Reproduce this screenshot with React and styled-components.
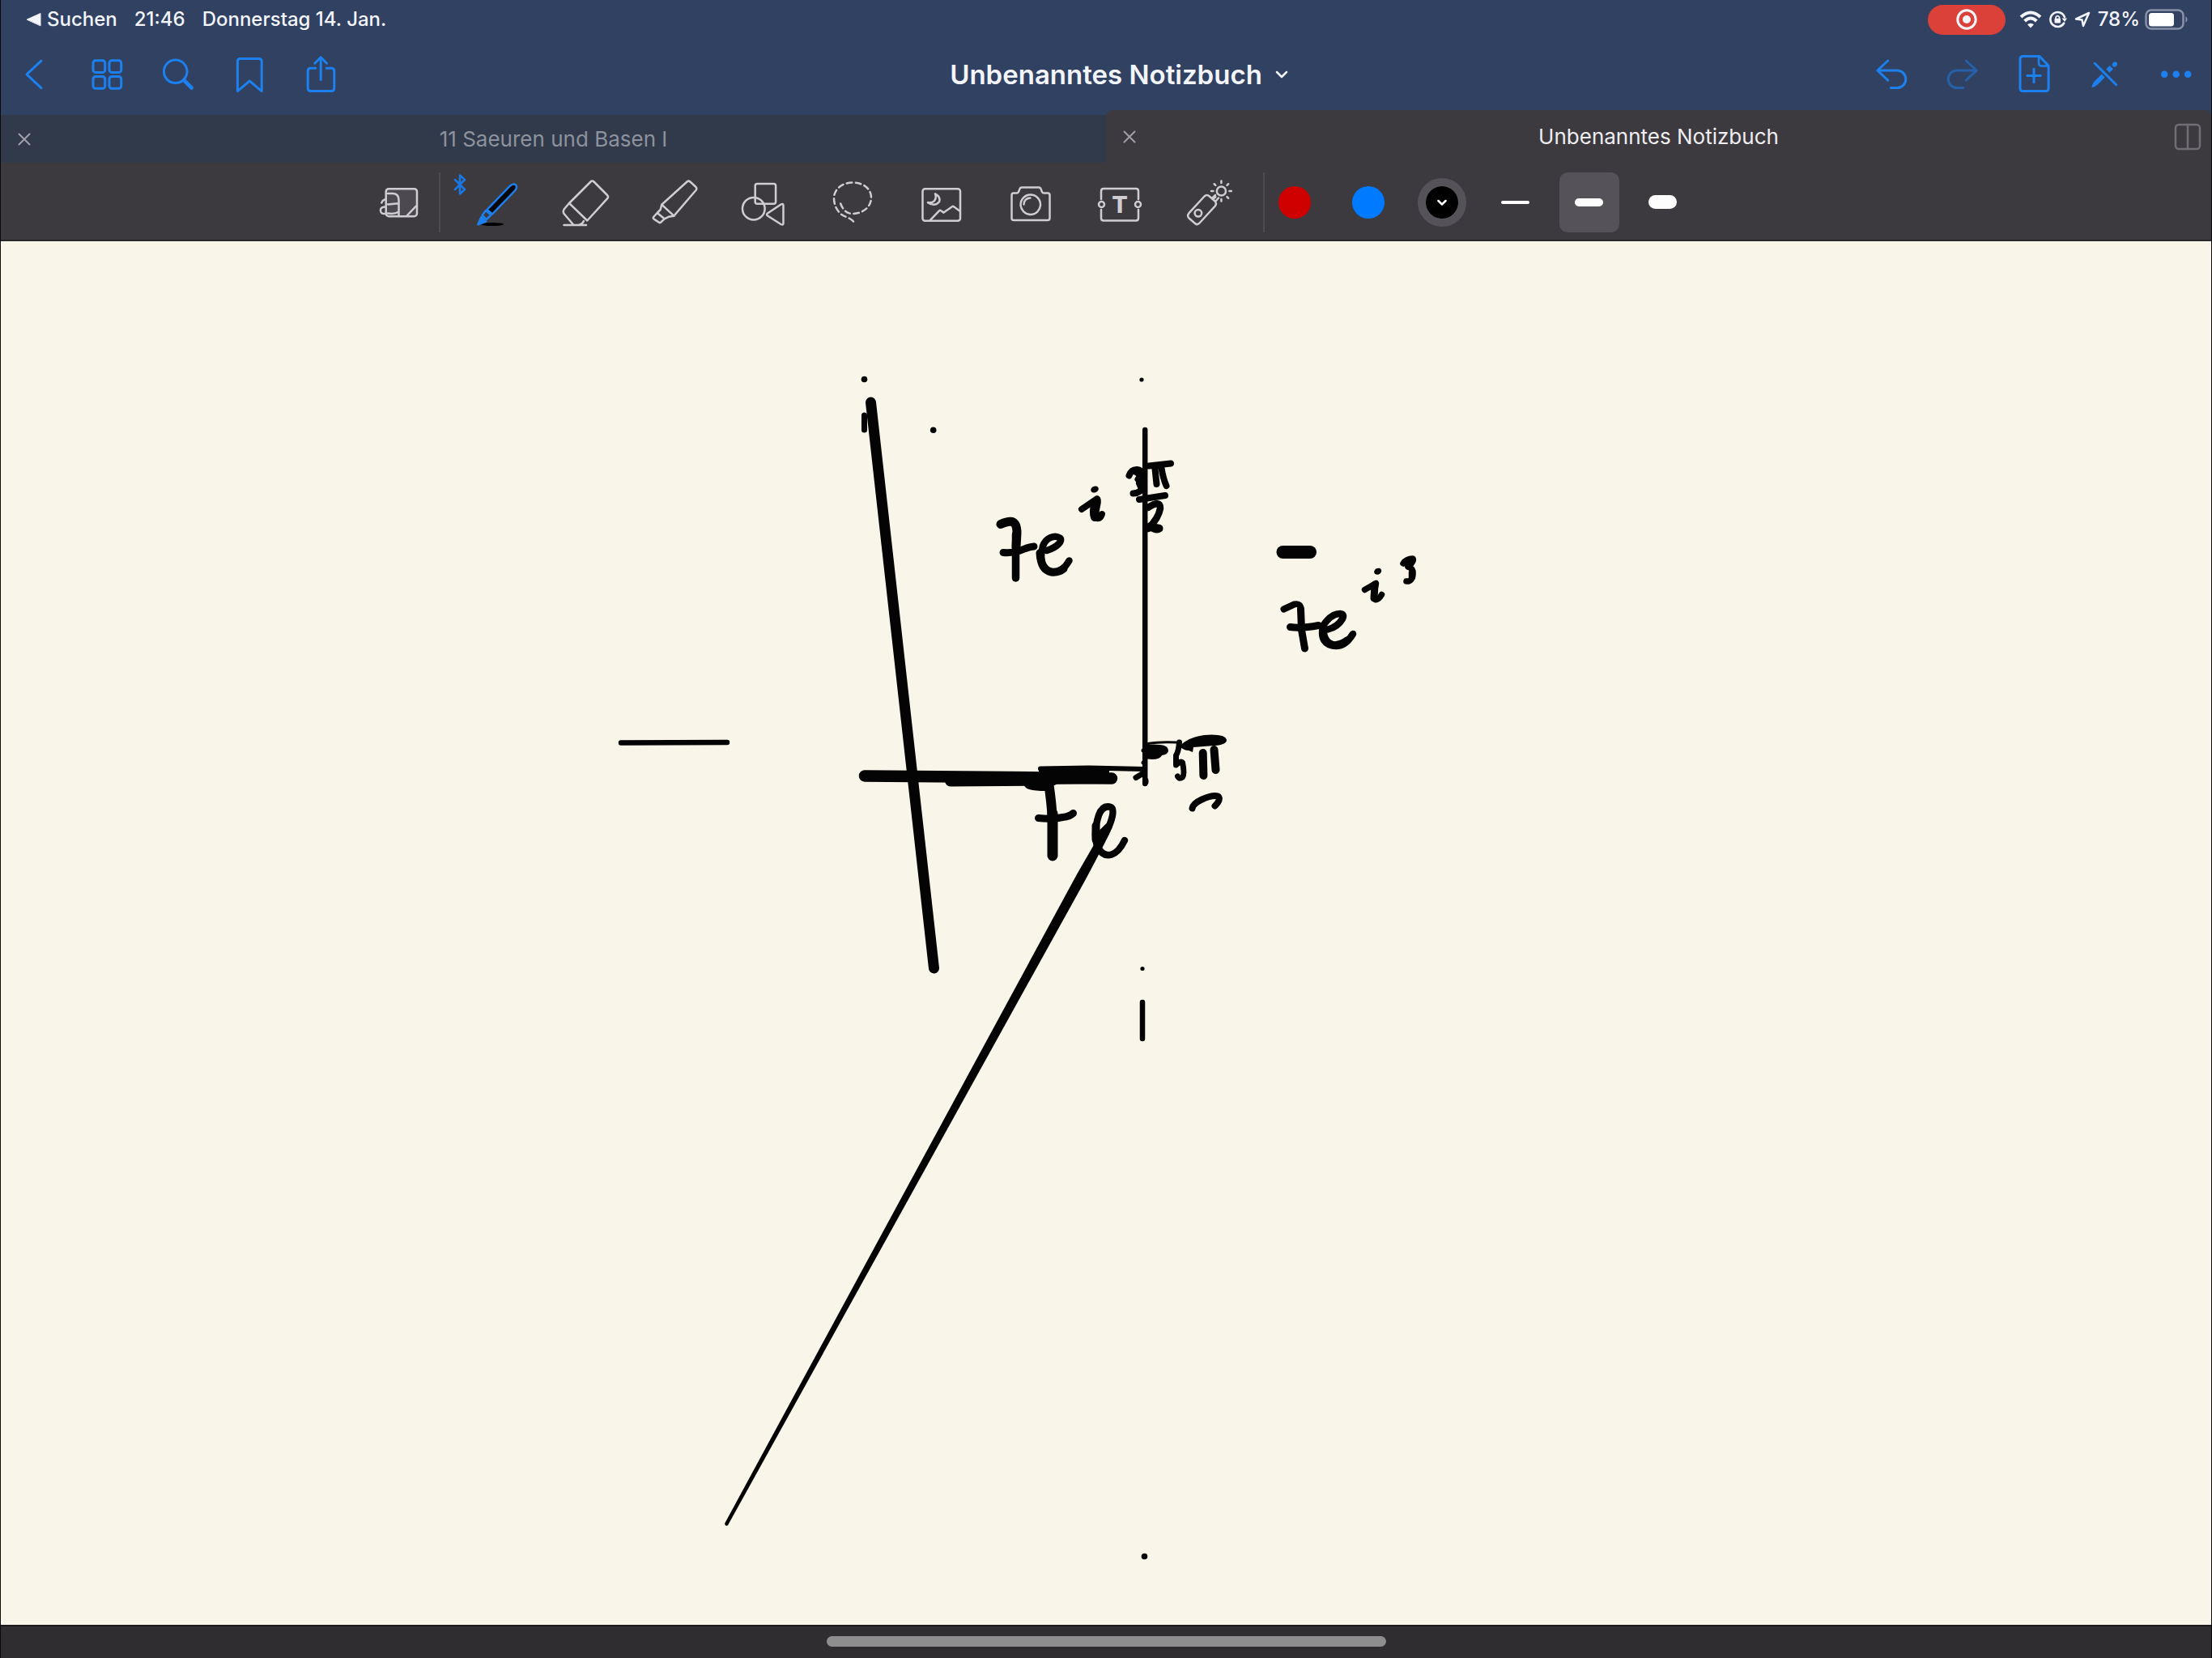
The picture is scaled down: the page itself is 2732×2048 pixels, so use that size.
import React from "react";
import styled, { createGlobalStyle } from "styled-components";

const color = {
  header: "#304162",
  tab: "#303a4b",
  panel: "#3d3a3f",
  raised: "#555359",
  accent: "#1c80ee",
  paper: "#f9f6e9",
  ink: "#050405",
  icon: "#cfcdd2",
};

const GlobalStyle = createGlobalStyle`
  *, *::before, *::after { box-sizing: border-box; }
  body { margin: 0; background: #000; }
  button { margin: 0; padding: 0; border: 0; background: none; color: inherit; font: inherit; cursor: pointer; }
`;

const Page = styled.div`
  display: flex;
  flex-direction: column;
  min-height: 100vh;
  border: solid #0b0b0d;
  border-width: 0 1px;
  background: ${color.header};
  color: #f3f5fa;
  font-family: Inter, "Liberation Sans", sans-serif;
`;

const Glyph = styled.svg`
  display: block;
  flex: none;
  fill: none;
  stroke: currentColor;
  stroke-width: ${(p) => p.$weight || 3};
  stroke-linecap: round;
  stroke-linejoin: round;
`;

/* Status bar */

const StatusBar = styled.div`
  display: flex;
  justify-content: space-between;
  align-items: center;
  height: 48px;
  padding: 0 28px 0 31px;
  font-size: 24px;
  font-weight: 500;
  line-height: 28px;
`;

const StatusGroup = styled.div`
  display: flex;
  align-items: center;
  gap: ${(p) => p.$gap}px;
`;

const BackToApp = styled.button`
  display: flex;
  align-items: center;
  gap: 7px;
`;

const RecordButton = styled.button`
  display: grid;
  place-items: center;
  width: 96px;
  height: 37px;
  margin-right: 8px;
  border-radius: 19px;
  background: #db4138;
`;

/* Battery sits closer to its reading than the other status items. */
const Charge = styled.span`
  display: flex;
  align-items: center;
  gap: 6px;
`;

/* Navigation bar */

const NavBar = styled.nav`
  display: grid;
  grid-template-columns: 1fr auto 1fr;
  align-items: center;
  height: 88px;
`;

const NavGroup = styled.div`
  display: flex;
  justify-content: ${(p) => (p.$end ? "flex-end" : "flex-start")};
`;

const NavButton = styled.button`
  display: grid;
  place-items: center;
  width: 88px;
  height: 88px;
  color: ${color.accent};
  &:disabled { opacity: 0.5; }
`;

const TitleButton = styled.button`
  display: flex;
  align-items: center;
  gap: 16px;
  padding-left: 32px;
  font-size: 33px;
  font-weight: 600;
  line-height: 40px;
`;

/* Tabs */

const TabBar = styled.div`
  display: grid;
  grid-template-columns: 1fr 1fr;
  align-items: end;
`;

const Tab = styled.div`
  display: grid;
  grid-template-columns: 58px 1fr 58px;
  align-items: center;
  height: ${(p) => (p.$active ? 65 : 59)}px;
  border-radius: ${(p) => (p.$active ? "8px 8px 0 0" : 0)};
  background: ${(p) => (p.$active ? color.panel : color.tab)};
  color: ${(p) => (p.$active ? "#eeedf0" : "#8d929d")};
  font-size: 26px;
  font-weight: 400;
  line-height: 32px;
`;

const TabIcon = styled.button`
  display: grid;
  place-items: center;
  height: 59px;
  color: ${(p) => (p.$dim ? "#706e74" : "#a09fa8")};
`;

/* Drawing tools */

const Toolbar = styled.div`
  display: flex;
  justify-content: center;
  align-items: center;
  height: 97px;
  padding: 2px 200px 0 0;
  border-bottom: 2px solid #2a272b;
  background: ${color.panel};
  color: ${color.icon};
`;

const Divider = styled.span`
  width: 2px;
  height: 74px;
  background: #4d4b51;
`;

const PreviewButton = styled.button`
  display: grid;
  place-items: center;
  width: 100px;
  height: 74px;
`;

const ToolGroup = styled.div`
  display: flex;
  padding: 0 12px 0 14px;
`;

const ToolButton = styled.button`
  display: grid;
  place-items: center;
  position: relative;
  width: 110px;
  height: 74px;
`;

const BluetoothBadge = styled.span`
  position: absolute;
  top: 2px;
  left: 2px;
  color: #1877e6;
`;

const PickGroup = styled.div`
  display: flex;
  gap: 17px;
`;

const PickButton = styled.button`
  display: grid;
  place-items: center;
  width: 74px;
  height: 74px;
  border-radius: 10px;
  background: ${(p) => (p.$selected ? color.raised : "transparent")};
`;

const Swatch = styled.span`
  display: grid;
  place-items: center;
  box-sizing: content-box;
  width: 40px;
  height: 40px;
  border: 10px solid ${(p) => (p.$selected ? color.raised : "transparent")};
  border-radius: 50%;
  background: ${(p) => p.$fill} padding-box;
  color: #fff;
`;

const StrokeSample = styled.span`
  width: 35px;
  height: ${(p) => p.$thickness}px;
  border-radius: 9px;
  background: #fdfdfd;
`;

/* Page and home bar */

const Paper = styled.main`
  flex: 1;
  background: ${color.paper};
`;

const Ink = styled.svg`
  display: block;
  width: 100%;
  height: auto;
  fill: none;
  stroke: ${color.ink};
  stroke-linecap: round;
  stroke-linejoin: round;
`;

const HomeBar = styled.footer`
  display: grid;
  place-items: center;
  height: 41px;
  padding-bottom: 2px;
  border-top: 2px solid #1c1a1c;
  background: #302d31;
`;

const HomeIndicator = styled.span`
  width: 691px;
  height: 13px;
  border-radius: 7px;
  background: #8e8e8e;
`;

const NavIcon = ({ children, weight }) => (
  <Glyph width="48" height="48" viewBox="1 0 48 48" $weight={weight} aria-hidden="true">{children}</Glyph>
);
const ToolIcon = ({ children }) => (
  <Glyph width="64" height="64" viewBox="0 0 64 64" $weight={2.5} aria-hidden="true">{children}</Glyph>
);
const CloseIcon = () => (
  <Glyph width="16" height="16" viewBox="0 0 16 16" $weight={2} aria-hidden="true">
    <path d="M1.5 1.5l13 13M14.5 1.5l-13 13" />
  </Glyph>
);

const leftActions = [
  ["Zurück", <path d="M30.900 7.200 13 23.800 30.900 40.600" />],
  ["Übersicht", <><rect x="7" y="6.7" width="14.7" height="14.7" rx="3" /><rect x="27" y="6.7" width="14.7" height="14.7" rx="3" /><rect x="7" y="26.5" width="14.7" height="14.7" rx="3" /><rect x="27" y="26.5" width="14.7" height="14.7" rx="3" /></>],
  ["Suchen", <><circle cx="20.7" cy="20.3" r="14.3" /><path strokeWidth="4.6" d="m31.6 31.5 9 9" /></>],
  ["Lesezeichen", <path d="M9.4 44.6V8q0-3.5 3.5-3.5h22.8q3.5 0 3.5 3.5v36.6L24.3 32Z" />],
  ["Teilen", <><path d="M17.8 16.3h-6q-3.6 0-3.6 3.6V41q0 3.6 3.6 3.6h25.4q3.6 0 3.6-3.6V19.9q0-3.6-3.6-3.6h-6" /><path d="M24.2 30.5V3.2M16.8 10.2l7.4-7.4 7.4 7.4" /></>],
];

const turnArrow = "M28.3 7 41.2 19 28.3 31.2M41 19H17a10.8 10.8 0 0 0 0 21.6h7.7";

const rightActions = [
  ["Rückgängig", <path transform="matrix(-1 0 0 1 50 0)" d={turnArrow} />],
  ["Wiederholen", <path transform="translate(2 0)" d={turnArrow} />, true],
  ["Seite hinzufügen", <g transform="translate(2 0)"><path d="M10.5 1.6h20.6l11 11.6V41q0 3.5-3.5 3.5H10.5Q7 44.500 7 41V5.100Q7 1.600 10.500 1.600Z" /><path d="M30 2v8q0 3.500 3.500 3.500h8" strokeWidth="2.500" /><path d="M24 17.300v16.400M15.800 25.500h16.400" /></g>],
  ["Nur lesen", <g transform="translate(2 0)"><path d="m11.200 10.300 26.500 26.500" /><path d="M7.300 40.300q1.200-6 4.200-8.500l8.300-8.300 4 4-8.500 8.500q-3 3-8 4.300Z" fill="currentColor" stroke="none" /><path d="m27.300 19.700 4.500-4.500" strokeWidth="6" strokeLinecap="butt" /><path d="M35.600 11.700l.6-.6" strokeWidth="5.600" /></g>],
  ["Mehr", <g transform="translate(2 0)" fill="currentColor" stroke="none"><circle cx="9.200" cy="23.800" r="4.300" /><circle cx="23.700" cy="23.800" r="4.300" /><circle cx="38.200" cy="23.800" r="4.300" /></g>],
];

const sunRays = [0, 45, 90, 135, 180, 225, 270, 315];

const tools = [
  ["Stift", <>
    <ellipse cx="27" cy="59" rx="14" ry="2" fill="#000" stroke="none" />
    <g stroke={color.accent}>
      <path d="M20.500 41 48.500 12q4.500-4 7.500-1.500 2.700 3-1.500 7.500L27 46.500Z" fill="#08080c" />
      <path d="M19 42 14.500 48l5.500 5 5.500-5.500Z" />
      <path d="m9.300 59.300 4-9 6 5.300Z" fill={color.accent} />
    </g>
  </>],
  ["Radierer", <>
    <path d="M38.500 6.500q2-2 4 0L59 23q2 2.200 0 4.400L34.300 54.500 12 33Z" />
    <path d="M12 33 6 40q-2.500 3.500 0 6.500l10.500 12.300M30 55q-2 4-5 4.500" />
    <path d="M5.500 60h27.500" />
  </>],
  ["Textmarker", <>
    <path d="M47.500 6.500q2-1.800 4 0l7 6.500q1.600 1.800 0 4L31.300 48.700 16.300 34.700Z" />
    <path d="M16.300 34.700 14.700 41l-4 4 9 7.300 5-2.500 6.600-1.100M10.700 45l-4.500 5q-1 1.500.5 2.600l6.300 4.200q1.500.8 2.600-.6l4.100-3.900" />
  </>],
  ["Formen", <><rect x="21.700" y="9" width="25.400" height="24.800" rx="2.500" /><circle cx="19.800" cy="39.700" r="13.800" /><path d="m37 45.500 16.500-11q3-1.500 3 1.500v21.500q0 3-3 1.500L37 48.500q-2-1.500 0-3Z" /></>],
  ["Lasso", <>
    <path strokeDasharray="6.500 4.500" d="M17.200 33.500Q22 46.500 33 46c13-.8 22-9 22-20S45 7.500 32 7.500 9 16 9 26.500Q9 36 14.500 43c4 5.500 8 6 14 9q5 2.500 6.500 7.500" />
  </>],
  ["Bild", <><rect x="8.500" y="15.200" width="46.500" height="39.500" rx="3" /><path d="m17.500 54.300 11.500-12q1-1 2.200 0l3.300 2.300L45 37.200q1-.7 2 0l7.500 5.600" /><path d="M24 21.300q7 3.500 5 10-5.500 6.500-14 .8 5 1 8-2 3-3.300 1-8.800Z" /></>],
  ["Kamera", <><path d="M11 20.500h3.500q1.800 0 2.500-1.600l1.600-3.800q.7-1.600 2.400-1.600h21q1.700 0 2.400 1.600l1.600 3.800q.7 1.600 2.500 1.600H53q2.500 0 2.500 2.500v28.500q0 2.500-2.500 2.500H11q-2.500 0-2.500-2.500V23q0-2.500 2.500-2.500Z" /><circle cx="31.800" cy="34.700" r="12.200" /><path d="M23.500 34.500q.5-7.500 8-8" /></>],
  ["Text", <>
    <path d="M9 28v-10q0-3 3-3h40q3 0 3 3v10M9 41v10.500q0 3 3 3h40q3 0 3-3V41" />
    <circle cx="9.500" cy="34.500" r="3.500" /><circle cx="54.500" cy="34.500" r="3.500" />
    <text x="32" y="45" textAnchor="middle" fill="currentColor" stroke="none" fontFamily="Inter, sans-serif" fontWeight="800" fontSize="29">T</text>
  </>],
  ["Laserpointer", <>
    <path d="M26.500 24.500q3-3 6.300 0l6.500 5.700q3 3 .5 6.300L20.500 57.500q-2.700 3-5.500.5l-7.500-6.500q-2.700-3 0-6.300Z" />
    <circle cx="18.900" cy="45.300" r="4.300" />
    <path d="m36.500 26.500 3.500-3.500M40.500 30.500l3.500-4" />
    <circle cx="47.400" cy="18" r="5.600" />
    {sunRays.map((a) => <path key={a} d="M57.400 18h2.400" transform={`rotate(${a} 47.400 18)`} />)}
  </>],
];

function StatusIcons() {
  return (
    <>
      <RecordButton aria-label="Aufnahme">
        <Glyph width="28" height="28" viewBox="0 0 28 28" aria-hidden="true">
          <circle cx="14" cy="14" r="11.200" /><circle cx="14" cy="14" r="5" fill="currentColor" stroke="none" />
        </Glyph>
      </RecordButton>
      <Glyph width="28" height="22" viewBox="0 0 28 22" $weight={4} aria-label="WLAN" role="img">
        <path d="M2 8Q14-3 26 8M6.700 13Q14 6 21.300 13" strokeLinecap="butt" />
        <path d="m14 21.500-4-4.200q4-3.300 8 0Z" fill="currentColor" stroke="none" />
      </Glyph>
      <Glyph width="22" height="22" viewBox="0 0 22 22" $weight={2.5} aria-label="Ausrichtung gesperrt" role="img">
        <path d="M18.200 15.500A9 9 0 1 1 18.900 8" />
        <path d="m15.500 9.500h6.500l-3 4.500Z" fill="currentColor" stroke="none" />
        <rect x="6.500" y="9.700" width="7.500" height="5.800" rx="1" fill="currentColor" stroke="none" />
        <path d="M8 10V8.300q2.200-3.300 4.500 0V10" strokeWidth="1.600" />
      </Glyph>
      <Glyph width="20" height="20" viewBox="0 0 20 20" $weight={2.5} aria-label="Ortung" role="img">
        <path d="M18 2 2 9.500l7.500 1L11 18Z" />
      </Glyph>
      <Charge>
        78%
        <Glyph width="54" height="26" viewBox="0 0 54 26" $weight={2.5} aria-label="Batterie" role="img">
          <rect x="1.500" y="1.500" width="46" height="23" rx="6.500" opacity=".45" />
          <rect x="5" y="5" width="31" height="16.500" rx="3.500" fill="#fff" stroke="none" />
          <path d="M50.500 9q4 4 0 8Z" fill="currentColor" stroke="none" opacity=".5" />
        </Glyph>
      </Charge>
    </>
  );
}

function Handwriting() {
  return (
    <Ink viewBox="1 298 2730 1709" role="img" aria-label="Handschriftliche Notizen">
      <g fill={color.ink} stroke="none">
        <circle cx="1067.500" cy="468.500" r="3.800" />
        <circle cx="1152.700" cy="531.300" r="3.800" />
        <circle cx="1410" cy="469" r="2.600" />
        <circle cx="1411" cy="1196.500" r="2.600" />
        <circle cx="1413.500" cy="1922.500" r="3.800" />
        <ellipse cx="1352" cy="604.500" rx="5" ry="3.800" transform="rotate(-25 1352 604.500)" />
        <ellipse cx="1701.700" cy="705.700" rx="4.700" ry="3.800" transform="rotate(-25 1701.700 705.700)" />
        <path d="m1364 1021 8 5q-5 11-31 60L899 1884q-3 2-4-2L1330 1080Z" />
        <path d="M1457 922q9-11 30-14 26-2 28 6 0 6-15 7l-26 2-1 6-5-2q-6 0-11-5Z" />
        <path d="M1411 920q16-1 22 0 10 1 10 7 0 5-8 6-2 5-12 5l-12-1Z" />
        <path d="M1283 948l87 3v17l-79 1v8q-12 0-20-2-7-2-7-10h19Z" />
      </g>

      <path d="M1067.500 513v18" strokeWidth="7" />
      <path d="M767 917.500 898 917M1414.200 531v437M1411 1238v45" strokeWidth="6.500" />
      <path d="M1285 949.500l60-1 68 1.500" strokeWidth="6" />
      <path d="m1403 960.500 10-6M1415 964v2" strokeWidth="7" />
      <path d="M1418 918.500q14-2.500 35-1.500" strokeWidth="3" />
      <path d="M1412 927v0M1412 942v0" strokeWidth="5" />
      <path d="M1075.500 497 1153.500 1196" strokeWidth="13" />
      <path d="m1068 958.500 180 1.500 125 1.500" strokeWidth="14.500" />
      <path d="M1174 964.500 1300 963.500" strokeWidth="14" />

      <path d="M1236 647.500q9-4 14-3 6 2 6 14l-1 17" strokeWidth="11" />
      <path d="M1254.500 660v54" strokeWidth="9.500" />
      <path d="M1239 682.500q14 1 25-4 7-3 13-3.500" strokeWidth="9" />
      <path d="M1293 680c13-4 20-12 16-15.500-6-4-17-1-21 10-5 20 0 30 12 32 10 .5 16-6 20.500-14" strokeWidth="8.500" />
      <path d="M1284.500 683q1 21 14 23.500 9 1 15-4" strokeWidth="10" />

      <path d="m1336 629 19-13q2 1 0 9-3 14 0 15 4 1 6-5" strokeWidth="8" />
      <path d="M1352.500 620q-3 14-.5 19" strokeWidth="10" />

      <path d="M1394.500 587.500q3-8 10-7.500 9 1 1 12 7 3 6 9-2 8-12 8.500" strokeWidth="8" />
      <path d="M1403 583l5 3M1407 597l3 7" strokeWidth="8" />
      <path d="m1419 575.500 27-3M1426.500 579l2 19M1434.500 578q2 13 6 22M1407 617l32-5" strokeWidth="8" />
      <path d="M1418 627q15-10 15 1-2 12-15 25 6-3 14-1" strokeWidth="8.500" />
      <path d="M1420 650q8 6 12 3" strokeWidth="9" />

      <path d="M1584.500 682h33.500" strokeWidth="16" />
      <path d="m1585.500 752.500 13-6q9-2 8 8" strokeWidth="8" />
      <path d="M1606.500 752l1 26 4 23" strokeWidth="9" />
      <path d="M1593.500 774.500q14 2 35-2" strokeWidth="9" />
      <path d="M1640 777.500q12-3 18-13 3-6-3-6.500-11 0-21 15-5 24 16 25 12 0 21-15" strokeWidth="8.500" />
      <path d="M1634 778q1 18 15 19 9-1 15-6" strokeWidth="9.500" />

      <path d="m1685.500 728.500 14-8q-4 18-1 20 4 1 8-6" strokeWidth="7.500" />
      <path d="m1698 722-1 17" strokeWidth="9" />
      <path d="M1733 696q4-6 12-6 2 3-6 10 7 2 6 9-1 10-8 9" strokeWidth="7.500" />
      <path d="m1744 692-4 8M1744 707v6" strokeWidth="8.500" />

      <path d="M1295.500 970q3 20 4 37" strokeWidth="12" />
      <path d="M1300 1005v52" strokeWidth="13" />
      <path d="M1282.500 1010.500q16 2 30-1 9-1 13-5" strokeWidth="9" />
      <path d="M1370 1020q8-20 2-23-10-3-15 10-7 22-2 38 7 14 18 10.500 9-3 16-17.500" strokeWidth="8.500" />
      <path d="M1353.500 1020v17l15-15" strokeWidth="10" />

      <path d="M1456.500 917q-1 12-4 16v12q6-6 8-3 3 14 0 18-4 3-6-1" strokeWidth="7" />
      <path d="m1485.700 930 .7 28M1499.500 926l2 25" strokeWidth="10" />
      <path d="M1472.500 998.500q1-6 12-11 13-6 20-4 4 4-4 12" strokeWidth="8" />
    </Ink>
  );
}

export default function App() {
  return (
    <>
      <GlobalStyle />
      <Page>
        <StatusBar>
          <StatusGroup $gap={21}>
            <BackToApp>
              <Glyph width="19" height="18" viewBox="0 0 19 18" $weight={1} aria-hidden="true">
                <path d="M1.500 9 18 1.500v15Z" fill="currentColor" />
              </Glyph>
              Suchen
            </BackToApp>
            <time>21:46</time>
            <span>Donnerstag 14. Jan.</span>
          </StatusGroup>
          <StatusGroup $gap={9}><StatusIcons /></StatusGroup>
        </StatusBar>

        <NavBar>
          <NavGroup>
            {leftActions.map(([label, icon]) => (
              <NavButton key={label} aria-label={label}><NavIcon weight={3}>{icon}</NavIcon></NavButton>
            ))}
          </NavGroup>
          <TitleButton>
            Unbenanntes Notizbuch
            <Glyph width="16" height="12" viewBox="0 0 16 12" $weight={2.5} aria-hidden="true">
              <path d="m2 3 6 6 6-6" />
            </Glyph>
          </TitleButton>
          <NavGroup $end>
            {rightActions.map(([label, icon, disabled]) => (
              <NavButton key={label} aria-label={label} disabled={disabled}><NavIcon weight={3}>{icon}</NavIcon></NavButton>
            ))}
          </NavGroup>
        </NavBar>

        <TabBar>
          <Tab>
            <TabIcon aria-label="Tab schließen"><CloseIcon /></TabIcon>
            <button>11 Saeuren und Basen I</button>
          </Tab>
          <Tab $active>
            <TabIcon aria-label="Tab schließen"><CloseIcon /></TabIcon>
            <button>Unbenanntes Notizbuch</button>
            <TabIcon $dim aria-label="Geteilte Ansicht">
              <Glyph width="34" height="34" viewBox="0 0 34 34" $weight={2.5} aria-hidden="true">
                <rect x="2" y="2" width="30" height="30" rx="4" /><path d="M17 2v30" />
              </Glyph>
            </TabIcon>
          </Tab>
        </TabBar>

        <Toolbar>
          <PreviewButton aria-label="Zoomfenster">
            <ToolIcon>
              <rect x="16.700" y="15.200" width="38.300" height="34" rx="3.500" fill="#4c4a50" />
              <path d="M19 21h6.500q7 .5 7 8v19M19 34.500l13-1.300M19 45.500q8 1.500 13.500-2" />
              <path d="M11.300 32.500q1.500-4 5-4M16.300 37.500q-6.500 0-6.300 4.500t5.500 4M42.500 48.500l11.500-12" />
            </ToolIcon>
          </PreviewButton>
          <Divider />
          <ToolGroup>
            {tools.map(([label, icon], i) => (
              <ToolButton key={label} aria-label={label} aria-pressed={i === 0}>
                {i === 0 && (
                  <BluetoothBadge>
                    <Glyph width="16" height="26" viewBox="0 0 16 26" $weight={2.5} aria-hidden="true">
                      <path d="m2 7 12 12-6 5.500v-23L14 7 2 19" />
                    </Glyph>
                  </BluetoothBadge>
                )}
                <ToolIcon>{icon}</ToolIcon>
              </ToolButton>
            ))}
          </ToolGroup>
          <Divider />
          <PickGroup>
            <PickButton aria-label="Rot"><Swatch $fill="#cf0000" /></PickButton>
            <PickButton aria-label="Blau"><Swatch $fill="#007aff" /></PickButton>
            <PickButton aria-label="Schwarz" aria-pressed="true">
              <Swatch $fill="#000" $selected>
                <Glyph width="12" height="10" viewBox="0 0 12 10" $weight={2.5} aria-hidden="true">
                  <path d="m1.500 3 4.500 4.500L10.500 3" />
                </Glyph>
              </Swatch>
            </PickButton>
            <PickButton aria-label="Dünn"><StrokeSample $thickness={4} /></PickButton>
            <PickButton aria-label="Mittel" aria-pressed="true" $selected><StrokeSample $thickness={10} /></PickButton>
            <PickButton aria-label="Dick"><StrokeSample $thickness={17} /></PickButton>
          </PickGroup>
        </Toolbar>

        <Paper><Handwriting /></Paper>
        <HomeBar><HomeIndicator /></HomeBar>
      </Page>
    </>
  );
}
